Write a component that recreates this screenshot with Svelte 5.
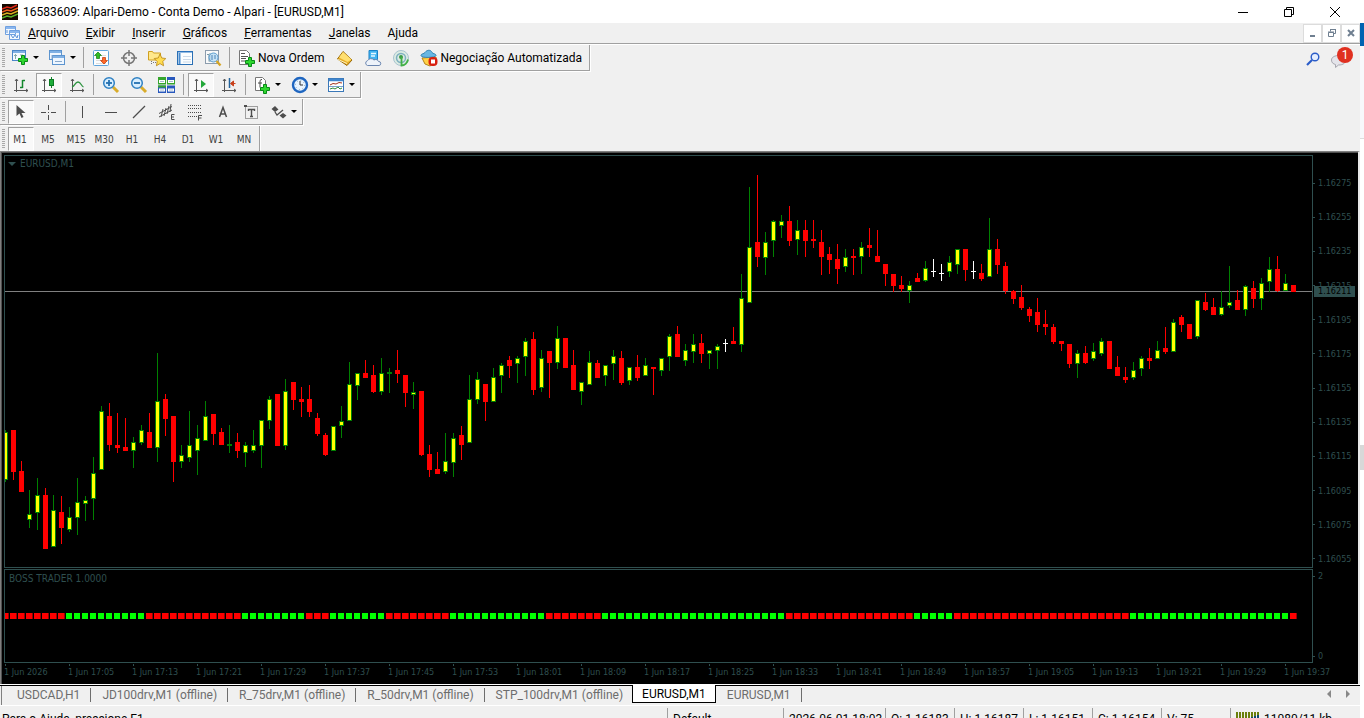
<script>
  const menus = ['Arquivo', 'Exibir', 'Inserir', 'Gráficos', 'Ferramentas', 'Janelas', 'Ajuda'];

  const toolbars = [
    [
      { icon: 'newchart', label: 'Novo gráfico', drop: true },
      { icon: 'profiles', label: 'Perfis', drop: true },
      { sep: true },
      { icon: 'market', label: 'Observação do mercado' },
      { icon: 'target', label: 'Janela de dados' },
      { icon: 'navigator', label: 'Navegador' },
      { icon: 'terminal', label: 'Terminal' },
      { icon: 'tester', label: 'Testador de estratégia' },
      { sep: true },
      { icon: 'order', label: 'Nova Ordem', text: true },
      { icon: 'editor', label: 'MetaEditor' },
      { icon: 'cloud', label: 'Hospedagem virtual' },
      { icon: 'signal', label: 'Sinais' },
      { icon: 'auto', label: 'Negociação Automatizada', text: true }
    ],
    [
      { icon: 'bars', label: 'Gráfico de barras' },
      { icon: 'candles', label: 'Candlesticks', on: true },
      { icon: 'line', label: 'Gráfico de linha' },
      { sep: true },
      { icon: 'zoomin', label: 'Mais zoom' },
      { icon: 'zoomout', label: 'Menos zoom' },
      { icon: 'tile', label: 'Lado a lado' },
      { sep: true },
      { icon: 'scroll', label: 'Rolagem automática', on: true },
      { icon: 'shift', label: 'Deslocamento do gráfico' },
      { sep: true },
      { icon: 'indicator', label: 'Indicadores', drop: true },
      { icon: 'clock', label: 'Períodos', drop: true },
      { icon: 'template', label: 'Modelos', drop: true }
    ],
    [
      { icon: 'cursor', label: 'Cursor', on: true },
      { icon: 'cross', label: 'Cruz' },
      { sep: true },
      { icon: 'vline', label: 'Linha vertical' },
      { icon: 'hline', label: 'Linha horizontal' },
      { icon: 'trend', label: 'Linha de tendência' },
      { icon: 'channel', label: 'Canal equidistante' },
      { icon: 'fibo', label: 'Retração de Fibonacci' },
      { icon: 'text', label: 'Texto' },
      { icon: 'label', label: 'Etiqueta' },
      { icon: 'arrows', label: 'Setas', drop: true }
    ]
  ];

  const periods = ['M1', 'M5', 'M15', 'M30', 'H1', 'H4', 'D1', 'W1', 'MN'];
  let period = $state('M1');

  const prices = ['1.16275', '1.16255', '1.16235', '1.16215', '1.16195', '1.16175', '1.16155', '1.16135', '1.16115', '1.16095', '1.16075', '1.16055'];
  const times = ['1 Jun 2026', '1 Jun 17:05', '1 Jun 17:13', '1 Jun 17:21', '1 Jun 17:29', '1 Jun 17:37', '1 Jun 17:45', '1 Jun 17:53', '1 Jun 18:01', '1 Jun 18:09', '1 Jun 18:17', '1 Jun 18:25', '1 Jun 18:33', '1 Jun 18:41', '1 Jun 18:49', '1 Jun 18:57', '1 Jun 19:05', '1 Jun 19:13', '1 Jun 19:21', '1 Jun 19:29', '1 Jun 19:37'];

  // u/d/w = up, down, doji; then high, body top, body bottom, low
  const raw = `u430,432,480,482 d430,430,472,480 d461,471,492,492 u490,514,520,528 u478,495,513,530 d488,495,549,549 u495,510,547,547 d496,512,528,544 u507,517,530,532 u478,502,518,535
u496,500,504,521 u457,473,499,520 u406,411,470,470 d403,416,445,451 d413,445,448,453 d418,447,451,451 u437,442,451,468 u425,430,443,445 d413,432,448,448 u353,401,448,462
d394,399,419,436 d416,416,462,482 u445,455,462,468 u411,445,458,462 u425,438,451,475 u401,416,441,441 d414,414,434,445 d428,432,445,445 u425,444,446,453 d433,442,451,458
u442,445,453,467 u430,445,451,453 u420,420,446,468 u396,399,421,429 d394,394,446,446 u379,391,446,450 d382,382,400,410 d387,399,402,417 d385,399,412,417 d413,418,434,436
d433,435,455,456 u426,426,451,451 u406,421,426,438 u362,384,421,421 u373,373,386,400 d360,373,378,378 d365,375,392,393 u358,373,392,395 u368,372,374,393 d350,370,374,383
d375,375,393,407 u382,392,395,409 d391,391,455,456 d445,454,470,477 d452,469,474,474 u433,461,472,474 u433,438,463,477 d426,435,445,460 u375,399,443,443 u372,379,400,404
d384,384,402,421 u368,377,402,402 u363,365,376,393 d356,360,366,378 u356,358,364,383 u338,341,357,376 d332,339,390,395 u350,358,388,392 d351,351,363,398 u326,338,363,369
d338,338,368,368 d350,365,390,390 u382,382,392,405 u351,362,385,385 d360,363,378,378 u365,365,376,386 u350,356,364,380 d351,358,383,385 u367,367,381,385 d355,367,378,381
u358,365,376,376 d367,367,369,395 u358,358,371,376 u334,336,357,371 d326,334,357,357 u344,350,361,366 u334,344,352,363 d334,343,354,363 u350,350,354,369 u344,346,351,369
w339,343,344,352 d327,341,344,344 u274,298,345,352 u187,247,303,303 d175,242,257,267 u232,242,258,275 u220,221,241,257 u215,221,226,238 d206,221,241,246 u220,230,240,255
d220,230,241,257 d220,239,241,248 d230,242,257,275 d247,254,260,274 d244,259,269,284 u249,257,267,272 d249,256,258,275 u242,247,257,274 d228,245,248,257 d230,256,262,262
d264,264,274,286 d274,274,286,292 d276,285,289,292 u281,285,291,303 d273,278,282,282 u261,268,281,282 w259,271,272,277 w264,273,274,281 u256,262,272,277 u249,249,265,274
d249,249,270,281 w261,271,272,279 d264,273,279,281 u218,249,277,277 d239,249,265,274 d262,266,291,294 d290,291,299,304 d285,297,308,310 d307,309,316,322 d298,312,325,332
d310,324,327,335 d324,327,342,344 d341,341,344,351 d344,344,364,368 u350,353,364,378 d346,353,363,364 u343,351,359,361 u338,341,354,356 d341,341,369,369 d356,367,376,376
d367,377,380,383 u362,370,378,380 u356,358,369,376 d348,358,361,369 u341,350,359,359 d327,348,352,354 u319,322,352,352 d315,317,325,332 d324,324,339,339 u300,300,337,339
d293,302,310,311 d298,307,315,315 u291,307,315,316 u266,302,306,308 d290,300,310,310 u285,286,310,316 d281,288,299,308 u278,283,299,310 u257,269,282,292 d256,269,291,292
u274,283,291,291 d285,285,292,292`;

  const plotTop = 156;
  const step = 8;
  const candles = raw.split(/\s+/).map((s, i) => {
    const [high, top, bottom, low] = s.slice(1).split(',').map((n) => Number(n) - plotTop);
    return { kind: s[0], x: i * step, high, top, bottom, low };
  });

  // lengths of the alternating sell / buy runs of the indicator
  const runs = [8, 10, 12, 8, 3, 7, 8, 12, 7, 23, 16, 5, 22, 20, 1];
  const marks = runs.flatMap((n, i) => Array(n).fill(i % 2 ? 'buy' : 'sell'));

  const tabs = ['USDCAD,H1', 'JD100drv,M1 (offline)', 'R_75drv,M1 (offline)', 'R_50drv,M1 (offline)', 'STP_100drv,M1 (offline)', 'EURUSD,M1', 'EURUSD,M1'];
  let tab = $state(5);
</script>

{#snippet plus(x, y)}
  <path transform="translate({x} {y})" d="M3.500 .500h3v3h3v3h-3v3h-3v-3h-3v-3h3z" fill="#2ed62e" stroke="#078a16" />
{/snippet}

{#snippet axes()}
  <path d="M4.500 3v13M2 14.500h14M3 5l1.500-2L6 5M14 13l2 1.500-2 1.500" fill="none" stroke="#555" />
{/snippet}

{#snippet icon(name)}
  <svg class="icon" width="18" height="18" viewBox="0 0 18 18" aria-hidden="true">
    {#if name === 'newchart'}
      <rect x=".500" y="1.500" width="13" height="10" fill="#f4f9ff" stroke="#4a86c8" />
      <path d="M1 3h12" stroke="#7fb0e4" stroke-width="2" />
      <path d="M3.500 5v5M2 6.500h3M8 6h3" stroke="#8aa" />
      {@render plus(6, 6)}
    {:else if name === 'profiles'}
      <rect x=".500" y="1.500" width="12" height="9" fill="#eef6ff" stroke="#5c94cf" />
      <path d="M1 3h11" stroke="#7fb0e4" stroke-width="2" />
      <rect x="3.500" y="6.500" width="12" height="9" fill="#eef6ff" stroke="#5c94cf" />
      <path d="M4 8h11" stroke="#7fb0e4" stroke-width="2" />
      <path d="M6 12.500h7M3 6v4" stroke="#89a9cc" />
    {:else if name === 'market'}
      <rect x="1.500" y="1.500" width="15" height="15" rx="1" fill="#fbfdff" stroke="#5fa4dc" />
      <path d="M4 6.500h10M4 11.500h10M4 14.500h10" stroke="#ddd" />
      <path d="M6 3l3.500 3.500h-2v3h-3v-3h-2z" fill="#2fbd22" stroke="#117a10" stroke-width=".7" />
      <path d="M12 15l-3.500-3.500h2v-3h3v3h2z" fill="#ff6a2a" stroke="#c03200" stroke-width=".7" />
    {:else if name === 'target'}
      <circle cx="9" cy="9" r="5.500" fill="none" stroke="#777" stroke-width="1.500" />
      <path d="M9 1v6M9 11v6M1 9h6M11 9h6" stroke="#777" stroke-width="1.500" />
    {:else if name === 'navigator'}
      <path d="M.500 2.500h4l1 1.500h7v7H.500z" fill="#ffe88c" stroke="#d0a020" />
      <path d="M3.500 12v4M5 13.500h3" stroke="#777" stroke-dasharray="1 1" />
      <path d="M12 5l1.800 4 4 .5-3 3 .8 4.300-3.600-2.200-3.600 2.200.8-4.300-3-3 4-.5z" fill="#ffdc50" stroke="#b98512" stroke-width=".8" />
    {:else if name === 'terminal'}
      <rect x="1.500" y="2.500" width="15" height="13" fill="#fafdff" stroke="#2a6fb4" />
      <path d="M2 3h14" stroke="#2a78c8" />
      <path d="M3.500 4v11" stroke="#4b8cce" stroke-width="2" />
      <path d="M7 7.500h8M7 10.500h8M7 13h8" stroke="#cbd9e8" />
    {:else if name === 'tester'}
      <rect x="1.500" y="1.500" width="13" height="13" fill="#fafafa" stroke="#8c9cad" />
      <path d="M3 5.500h2v7M6 4v9" stroke="#79a" fill="none" />
      <circle cx="9.500" cy="8.500" r="4.500" fill="#b9dcf5" fill-opacity=".8" stroke="#5c9dcf" />
      <path d="M8 6v5M11 6v4" stroke="#4b82b4" />
      <path d="M12.500 12l4 4.500" stroke="#d6a524" stroke-width="2.400" />
    {:else if name === 'order'}
      <path d="M1.500 1.500h7l3 3v11h-10z" fill="#fff" stroke="#777" />
      <path d="M3 4.500h4M3 7.500h7M3 9.500h5M3 12h4" stroke="#555" />
      {@render plus(7, 8)}
    {:else if name === 'editor'}
      <path d="M1.500 10L7 2.500l9 8.500-5 5.500z" fill="#e8ae28" stroke="#9a6a08" />
      <path d="M7 3l8.500 7.500-4 2.500L3 8.500z" fill="#ffdf70" />
      <path d="M2 10.500l9 4" stroke="#fff3c0" />
    {:else if name === 'cloud'}
      <path d="M5 1.500h8.500v9H5z" fill="#43b4f0" stroke="#1a82c8" />
      <path d="M7 4.500h5M7 7h4" stroke="#e8f8ff" stroke-width="1.500" />
      <path d="M3.500 16.500a2.500 2.500 0 0 1 0-4.800 4 4 0 0 1 6.500-.7 3 3 0 0 1 4.500 1.500 2 2 0 0 1 .5 4z" fill="#eef3fa" stroke="#6b86b0" />
    {:else if name === 'signal'}
      <circle cx="9" cy="9" r="7.500" fill="#dcebe2" stroke="#a8c4d0" />
      <circle cx="9" cy="9" r="4.500" fill="none" stroke="#7fb0c0" stroke-width="1.500" />
      <circle cx="9" cy="8" r="2" fill="#3c9a48" />
      <path d="M9.500 8v8.500c3 0 6-2.500 6.500-6" fill="none" stroke="#42b046" stroke-width="1.800" />
    {:else if name === 'auto'}
      <path d="M2 9l3 6 5 2 6-4V8z" fill="#ffd146" stroke="#b38318" />
      <path d="M1 6.500c0-2 3-1.500 4-3C7 .500 11 .500 12 3.500c1 1.500 4 1 4 3s-15 3-15 0z" fill="#68b6e2" stroke="#3484b4" />
      <rect x="8.500" y="8" width="9" height="9" rx="4" fill="#d81f10" />
      <rect x="11" y="10.500" width="4" height="4" fill="#fff" />
    {:else if name === 'bars'}
      {@render axes()}
      <path d="M10.500 4v8M10.500 4.500h2.500M8 11.500h2.500" stroke="#13862c" stroke-width="1.500" fill="none" />
    {:else if name === 'candles'}
      {@render axes()}
      <path d="M11.500 1v11" stroke="#13862c" />
      <rect x="9.500" y="3.500" width="4" height="6" fill="#1fae3b" stroke="#0c7a24" />
    {:else if name === 'line'}
      {@render axes()}
      <path d="M4 11c3-1 3-5 6-5s3 4 5.500 5" fill="none" stroke="#2d9440" stroke-width="1.300" />
    {:else if name === 'zoomin' || name === 'zoomout'}
      <path d="M11 11l5 5" stroke="#d9ac2a" stroke-width="3" />
      <circle cx="7" cy="7" r="5.300" fill="#d9efff" stroke="#2f80c2" stroke-width="1.500" />
      <path d="M4 7h6" stroke="#2470b0" stroke-width="1.800" />
      {#if name === 'zoomin'}<path d="M7 4v6" stroke="#2470b0" stroke-width="1.800" />{/if}
    {:else if name === 'tile'}
      <path d="M0 1h8v7.500H0zM9 1h8v7.500H9z" fill="#35a52c" />
      <path d="M0 9.500h8V17H0zM9 9.500h8V17H9z" fill="#2858bc" />
      <path d="M9 1h8v3H9z" fill="#2858bc" />
      <path d="M0 9.500h8v2H0z" fill="#35a52c" />
      <path d="M1 5.500h6M10 5.500h6M1 14h6M10 14h6" stroke="#fff" stroke-width="3" />
      <path d="M2 5.500h4M11 5.500h4M2 14h4M11 14h4" stroke="#a8bccf" />
    {:else if name === 'scroll'}
      {@render axes()}
      <path d="M9 4l5 4-5 4z" fill="#23a83a" />
    {:else if name === 'shift'}
      {@render axes()}
      <path d="M9.500 2v10" stroke="#22629a" stroke-width="1.500" />
      <path d="M10.500 7.500l3-2.500v5zM12 7.500h3.500" fill="#c8401c" stroke="#c8401c" />
    {:else if name === 'indicator'}
      <path d="M1.500 1.500h7l3 3v10h-10z" fill="#fff" stroke="#777" />
      <path d="M8 3.500c-2 0-2 1-2 3v5M4 7h4" fill="none" stroke="#444" />
      {@render plus(6, 8)}
    {:else if name === 'clock'}
      <circle cx="9" cy="9" r="7" fill="#eaf5ff" stroke="#1f66c0" stroke-width="2.400" />
      <circle cx="9" cy="9" r="4.500" fill="none" stroke="#8ab" stroke-dasharray="1 2.500" />
      <path d="M9 5v4h3" fill="none" stroke="#333" />
    {:else if name === 'template'}
      <rect x=".500" y="2.500" width="15" height="13" fill="#fff" stroke="#3b78b8" />
      <path d="M1 4h14" stroke="#3f86cf" stroke-width="2.500" />
      <path d="M2 9l3-1.500 3 .5 3-1.500 3 .5" fill="none" stroke="#a2341e" />
      <path d="M2 13l3-1 2 1 3-2 2 2 2-1" fill="none" stroke="#2f8a3c" />
      <path d="M1 10.500h14" stroke="#7aa4cf" />
    {:else if name === 'cursor'}
      <path d="M4.500 2v11l3-2.500L9.500 15l2-1-2-4h4z" fill="#4d4d4d" />
    {:else if name === 'cross'}
      <path d="M8.500 2v5M8.500 12v5M1 9.500h5M11 9.500h5M8 9.500h1" stroke="#4d4d4d" />
    {:else if name === 'vline'}
      <path d="M8.500 3v12" stroke="#4d4d4d" />
    {:else if name === 'hline'}
      <path d="M3 9.500h12" stroke="#4d4d4d" />
    {:else if name === 'trend'}
      <path d="M3 15L15 3" stroke="#4d4d4d" stroke-width="1.200" />
    {:else if name === 'channel'}
      <path d="M1 10.500l13-7M1 14l13-7M3 14l2-8M6 13l2-8M9 11l2-8M12 9l1-8" stroke="#4d4d4d" />
      <path d="M16.500 11.500h-3v5h3M13.500 14h2.500" fill="none" stroke="#4d4d4d" />
    {:else if name === 'fibo'}
      <path d="M2 2.500h14M2 5.500h14M2 9.500h14M2 13.500h9" stroke="#4d4d4d" stroke-dasharray="1 1" />
      <path d="M16 12.500h-3.500v5M12.500 15h3" fill="none" stroke="#4d4d4d" />
    {:else if name === 'text'}
      <path d="M5.500 14L9 4.500 12.500 14M6.500 11h5" fill="none" stroke="#4d4d4d" stroke-width="1.500" />
    {:else if name === 'label'}
      <rect x="3.500" y="3.500" width="12" height="12" fill="none" stroke="#4d4d4d" stroke-dasharray="1 1" />
      <path d="M2 2h3v2H2z" fill="#4d4d4d" />
      <path d="M6.500 8V6.500h6V8M9.500 6v7M8 13.500h3" fill="none" stroke="#4d4d4d" stroke-width="1.400" />
    {:else if name === 'arrows'}
      <path d="M5 3l3.500 3.500L5 9 1.500 6zM13 10l3.500 2.500-3.500 3-3.500-3z" fill="#4d4d4d" />
      <path d="M5 9l2 3 6-5" fill="none" stroke="#4d4d4d" stroke-width="1.300" />
    {/if}
  </svg>
{/snippet}

<div class="screen">
  <div class="app">
    <header class="title">
      <svg width="16" height="16" viewBox="0 0 16 16" aria-hidden="true">
        <rect width="16" height="16" fill="#150800" />
        <g fill="none" stroke-width="1.500">
          <path d="M0 5l5-2 4 1 6-3" stroke="#e02818" />
          <path d="M0 8l5-2 4 1 7-3" stroke="#f06020" />
          <path d="M0 11l5-2 4 1 7-3" stroke="#d8b020" />
          <path d="M0 14l5-2 4 1 7-3" stroke="#58b028" />
        </g>
      </svg>
      <h1>16583609: Alpari-Demo - Conta Demo - Alpari - [EURUSD,M1]</h1>
      <div class="winbtns">
        <button aria-label="Minimizar"><svg width="12" height="12"><path d="M1 6.500h10" /></svg></button>
        <button aria-label="Restaurar"><svg width="12" height="12"><path d="M1.500 3.500h7v7h-7zM3.500 3.500v-2h7v7h-2" /></svg></button>
        <button aria-label="Fechar"><svg width="12" height="12"><path d="M1 1l10 10M11 1L1 11" /></svg></button>
      </div>
    </header>

    <nav class="menu">
      <svg width="16" height="14" viewBox="0 0 16 14" aria-hidden="true">
        <path d="M.500.500h10v8H.500zM4.500 4.500h10v9h-10z" fill="#f4f9ff" stroke="#6fa0e0" />
        <path d="M1 2h9M5 6h9" stroke="#8ab6ee" stroke-width="2" />
        <path d="M6 9l2 3 2-3 2 3 1-3M2 4v3" fill="none" stroke="#5f94d8" />
      </svg>
      {#each menus as m}
        <button>{#if m === 'Ajuda'}A<u>j</u>uda{:else}<u>{m[0]}</u>{m.slice(1)}{/if}</button>
      {/each}
      <div class="mdi">
        <button aria-label="Minimizar gráfico"><svg width="10" height="10"><path d="M2 8h5" stroke-width="2" /></svg></button>
        <button aria-label="Restaurar gráfico"><svg width="10" height="10"><path d="M1.500 4.500h5v4h-5zM1 4h6M3.500 3.500v-2h5v4h-2M3 1.500h6" /></svg></button>
        <button aria-label="Fechar gráfico"><svg width="10" height="10"><path d="M2 2l6 6M8 2L2 8" stroke-width="2" /></svg></button>
      </div>
    </nav>

    <section class="tools">
      <div class="bars">
        {#each toolbars as bar}
          <div class="bar" role="toolbar">
            <span class="grip"></span>
            {#each bar as b}
              {#if b.sep}
                <span class="sep"></span>
              {:else}
                <button class="tool" class:drop={b.drop} class:on={b.on} class:wide={b.text} aria-label={b.label}>
                  {@render icon(b.icon)}
                  {#if b.text}<span>{b.label}</span>{/if}
                  {#if b.drop}<i class="caret"></i>{/if}
                </button>
              {/if}
            {/each}
          </div>
        {/each}
        <div class="bar last" role="toolbar">
          <span class="grip"></span>
          {#each periods as p}
            <button class="tool period" class:on={p === period} onclick={() => (period = p)}>{p}</button>
          {/each}
        </div>
      </div>
      <div class="alerts">
        <button aria-label="Procurar">
          <svg width="14" height="14" viewBox="0 0 14 14">
            <circle cx="9" cy="5" r="3.800" fill="#e4eeff" stroke="#2a5cc8" stroke-width="1.400" />
            <path d="M6 8l-5 5" stroke="#2a5cc8" stroke-width="2.200" />
          </svg>
        </button>
        <button class="chat" aria-label="Mensagens">
          <svg width="16" height="14" viewBox="0 0 16 14">
            <path d="M8 1.500c-4 0-7.500 1.500-7.500 4.500s2 4 4 4.500v3l3-2.500c5 0 7-2 7-5s-2-4.500-6.500-4.500z" fill="#e4e4ea" stroke="#a8a8b0" />
          </svg>
          <span class="badge">1</span>
        </button>
      </div>
    </section>

    <main class="chart">
      <div class="panes">
        <div class="pane price">
          <svg width="100%" height="411" shape-rendering="crispEdges">
            <path d="M0 135.500H3000" stroke="#808080" />
            {#each candles as c}
              {#if c.kind === 'w'}
                <rect x={c.x} y={c.high} width="1" height={c.low - c.high} fill="#fff" />
                <rect x={c.x - 2} y={c.top} width="5" height="1" fill="#fff" />
              {:else if c.kind === 'd'}
                <rect x={c.x} y={c.high} width="1" height={c.low - c.high} fill="#f00" />
                <rect x={c.x - 2} y={c.top} width="5" height={c.bottom - c.top} fill="#f00" />
              {:else}
                <rect x={c.x} y={c.high} width="1" height={c.low - c.high} fill="#008000" />
                <rect x={c.x - 2} y={c.top} width="5" height={c.bottom - c.top} fill="#008000" />
                {#if c.bottom - c.top > 2}
                  <rect x={c.x - 1} y={c.top + 1} width="3" height={c.bottom - c.top - 2} fill="#ff0" />
                {/if}
              {/if}
            {/each}
          </svg>
          <div class="caption"><i class="caret"></i>EURUSD,M1</div>
        </div>
        <div class="scale">
          {#each prices as p}<span>{p}</span>{/each}
          <b class="current">1.16211</b>
        </div>
        <div class="pane">
          <svg width="100%" height="92" shape-rendering="crispEdges">
            {#each marks as m, i}
              <rect x={i * step - 3} y="43" width="6" height="6" fill={m === 'buy' ? '#0f0' : '#f00'} />
              {#if m === 'sell'}<rect x={i * step + 3} y="43" width="1" height="6" fill="#900" />{/if}
            {/each}
          </svg>
          <div class="caption">BOSS TRADER 1.0000</div>
        </div>
        <div class="scale small"><span>2</span><span>0</span></div>
        <div class="times">
          {#each times as t}<span>{t}</span>{/each}
        </div>
      </div>
    </main>

    <div class="tabs">
      {#each tabs as t, i}
        <button class:active={i === tab} class:before={i === tab - 1} onclick={() => (tab = i)}>{t}</button>
      {/each}
      <div class="pager">
        <button aria-label="Anterior"><svg width="5" height="8"><path d="M4 0v8L0 4z" fill="#888" /></svg></button>
        <button aria-label="Próximo"><svg width="5" height="8"><path d="M0 0v8l4-4z" fill="#888" /></svg></button>
      </div>
    </div>

    <footer class="status">
      <span class="help">Para o Ajuda, pressione F1</span>
      <span class="profile">Default</span>
      <span class="date">2026.06.01 18:03</span>
      <span>O: 1.16183</span>
      <span>H: 1.16187</span>
      <span>L: 1.16151</span>
      <span>C: 1.16154</span>
      <span>V: 75</span>
      <span class="net">
        <svg width="24" height="15" shape-rendering="crispEdges" aria-hidden="true">
          {#each Array(8) as _, i}
            <rect x={i * 3} y="0" width="2" height={i < 4 ? 15 : 11 - i} fill="#6b7f0c" />
            {#if i > 3}<rect x={i * 3} y={10 - i} width="2" height={5 + i} fill="#0f4a70" />{/if}
          {/each}
        </svg>
        11080/11 kb
      </span>
    </footer>
  </div>
  <aside class="behind"></aside>
</div>

<style>
  :global(body) {
    margin: 0;
    background: #fff;
  }
  .screen {
    display: flex;
    height: 100vh;
    overflow: hidden;
    font-family: Roboto, 'Open Sans', sans-serif;
    font-size: 12px;
    line-height: 16px;
    color: #000;
  }
  .app {
    flex: 1;
    min-width: 0;
  }
  button {
    margin: 0;
    padding: 0;
    border: 0;
    background: none;
    font: inherit;
    color: inherit;
    display: flex;
    align-items: center;
    justify-content: center;
  }

  .title {
    display: flex;
    align-items: center;
    height: 23px;
    padding: 0 2px;
    background: #fff;
  }
  .title h1 {
    flex: 1;
    margin: 0 0 0 5px;
    font-size: 12px;
    font-weight: 400;
  }
  .winbtns {
    display: flex;
  }
  .winbtns button {
    width: 46px;
    height: 20px;
  }
  .winbtns path {
    fill: none;
    stroke: #000;
  }

  .menu {
    display: flex;
    align-items: center;
    height: 20px;
    padding-left: 5px;
    background: #f0f0f0;
    border-bottom: 1px solid #a0a0a0;
  }
  .menu > svg {
    margin-right: 7px;
  }
  .menu > button {
    margin-right: 17px;
  }
  .mdi {
    display: flex;
    margin-left: auto;
  }
  .mdi button {
    width: 19px;
    height: 19px;
    background: #fff;
    border: 1px solid #dcdcdc;
  }
  .mdi path {
    fill: none;
    stroke: #6f7f90;
  }

  .tools {
    display: flex;
    justify-content: space-between;
    align-items: flex-start;
    background: #f0f0f0;
    border-top: 1px solid #fff;
  }
  .bars {
    display: flex;
    flex-direction: column;
    align-items: flex-start;
  }
  .bar {
    display: flex;
    align-items: center;
    height: 25px;
    padding-left: 2px;
    border-right: 1px solid #a0a0a0;
    border-bottom: 1px solid #a0a0a0;
    margin-bottom: 1px;
    box-shadow: 1px 1px #fff;
  }
  .bar.last {
    border-bottom: 0;
    margin-bottom: 0;
    box-shadow: 1px 0 #fff;
  }
  .grip {
    width: 3px;
    height: 20px;
    margin-right: 2px;
    background: repeating-linear-gradient(#a8a8a8 0 1px, #f0f0f0 1px 2px);
  }
  .sep {
    width: 1px;
    height: 21px;
    margin: 0 3px 0 2px;
    background: #a0a0a0;
  }
  .tool {
    box-sizing: border-box;
    width: 26px;
    height: 24px;
    margin: 0 1px;
    border: 1px solid transparent;
  }
  .tool.on {
    background: #f9f9f9;
    border-color: #a0a0a0 #fff #fff #a0a0a0;
  }
  .tool.drop {
    width: 36px;
    margin: 0 0 0 1px;
    justify-content: flex-start;
    padding-left: 3px;
  }
  .tool.wide {
    width: auto;
    padding: 0 5px 0 3px;
    gap: 2px;
  }
  .icon {
    flex: none;
  }
  .caret {
    border: 3px solid transparent;
    border-top-color: #000;
    border-bottom: 0;
  }
  .drop .caret {
    margin-left: 3px;
  }
  .period {
    padding: 2px 2px 0 0;
    font-family: 'DejaVu Sans Condensed', 'DejaVu Sans', sans-serif;
    font-size: 10px;
    color: #404040;
  }
  .alerts {
    display: flex;
    gap: 11px;
    padding: 5px 9px 0 0;
  }
  .chat {
    position: relative;
    width: 20px;
    height: 18px;
    justify-content: flex-start;
    align-items: flex-end;
  }
  .badge {
    position: absolute;
    top: -3px;
    right: -2px;
    width: 16px;
    height: 16px;
    border-radius: 50%;
    background: #e03020;
    color: #fff;
    text-align: center;
  }

  .chart {
    background: #000;
    border: solid #808080;
    border-width: 1px 0 0 1px;
    border-right: 2px solid #e8e8e8;
    box-shadow: inset 1px 1px #505050;
    color: #2f4f4f;
    font-family: 'DejaVu Sans Condensed', 'DejaVu Sans', sans-serif;
    font-size: 9px;
    line-height: 12px;
  }
  .panes {
    display: grid;
    grid-template-columns: 1fr 45px;
    row-gap: 1px;
    padding: 3px 0 0 3px;
  }
  .pane {
    position: relative;
    border: 1px solid #2f4f4f;
    overflow: hidden;
  }
  .pane svg {
    display: block;
  }
  .caption {
    position: absolute;
    top: 3px;
    left: 4px;
    display: flex;
    align-items: center;
    gap: 4px;
    font-size: 10px;
  }
  .price .caption {
    top: 2px;
    left: 3px;
  }
  .caption .caret {
    border-width: 4px 4px 0;
    border-top-color: #2f4f4f;
  }
  .scale {
    position: relative;
    display: flex;
    flex-direction: column;
    justify-content: space-between;
    padding: 22px 0 3px;
  }
  .scale.small {
    padding: 1px 0;
  }
  .scale span {
    display: flex;
    align-items: center;
    gap: 3px;
  }
  .scale span::before {
    content: '';
    width: 2px;
    height: 1px;
    background: #2f4f4f;
  }
  .current {
    position: absolute;
    top: 131px;
    left: 1px;
    right: 3px;
    padding-left: 4px;
    line-height: 11px;
    font-weight: 400;
    background: #2f4f4f;
    color: #000;
  }
  .times {
    grid-column: 1 / -1;
    display: flex;
    height: 20px;
    overflow: hidden;
  }
  .times span {
    position: relative;
    flex: none;
    width: 64px;
    padding-top: 2px;
    white-space: nowrap;
  }
  .times span::before {
    content: '';
    position: absolute;
    top: -1px;
    left: 1px;
    width: 1px;
    height: 3px;
    background: #2f4f4f;
  }

  .tabs {
    display: flex;
    align-items: flex-start;
    height: 19px;
    padding-left: 6px;
    background: linear-gradient(#808080, #808080) 1px 0 / 1px 100% no-repeat #f0f0f0;
    border-top: 1px solid #000;
    box-shadow: 0 -1px #fff;
    margin-top: 1px;
    color: #6d6d6d;
  }
  .tabs > button {
    height: 18px;
    padding: 0 11px;
    position: relative;
    white-space: nowrap;
  }
  .tabs > button::after {
    content: '';
    position: absolute;
    right: 0;
    top: 2px;
    width: 1px;
    height: 14px;
    background: #6d6d6d;
  }
  .tabs > button.active {
    padding: 0 9px;
    margin-top: -1px;
    background: #fff;
    border: 1px solid #000;
    border-top: 0;
    color: #000;
  }
  .tabs > button.active::after,
  .tabs > button.before::after {
    display: none;
  }
  .tabs > button.before {
    padding-right: 9px;
  }
  .pager {
    display: flex;
    gap: 14px;
    margin: 4px 9px 0 auto;
  }

  .status {
    display: flex;
    background: #f0f0f0;
    border-top: 1px solid #fff;
    line-height: 22px;
    height: 24px;
  }
  .status span {
    box-sizing: border-box;
    width: 69px;
    margin-top: 2px;
    padding-left: 5px;
    border-left: 1px solid #a0a0a0;
    white-space: nowrap;
  }
  .status .help {
    flex: 1;
    padding-left: 2px;
    border: 0;
  }
  .status .profile {
    width: 116px;
  }
  .status .date {
    width: 102px;
  }
  .status .net {
    display: flex;
    align-items: center;
    gap: 4px;
    width: 130px;
  }
  .behind {
    width: 4px;
    background: linear-gradient(#fff 0 23px, #0063b1 23px 46px, #f7f8fb 46px 138px, #ddd 138px 139px, #fff 139px 445px, #d8d8d8 445px 470px, #fff 470px);
  }
</style>
